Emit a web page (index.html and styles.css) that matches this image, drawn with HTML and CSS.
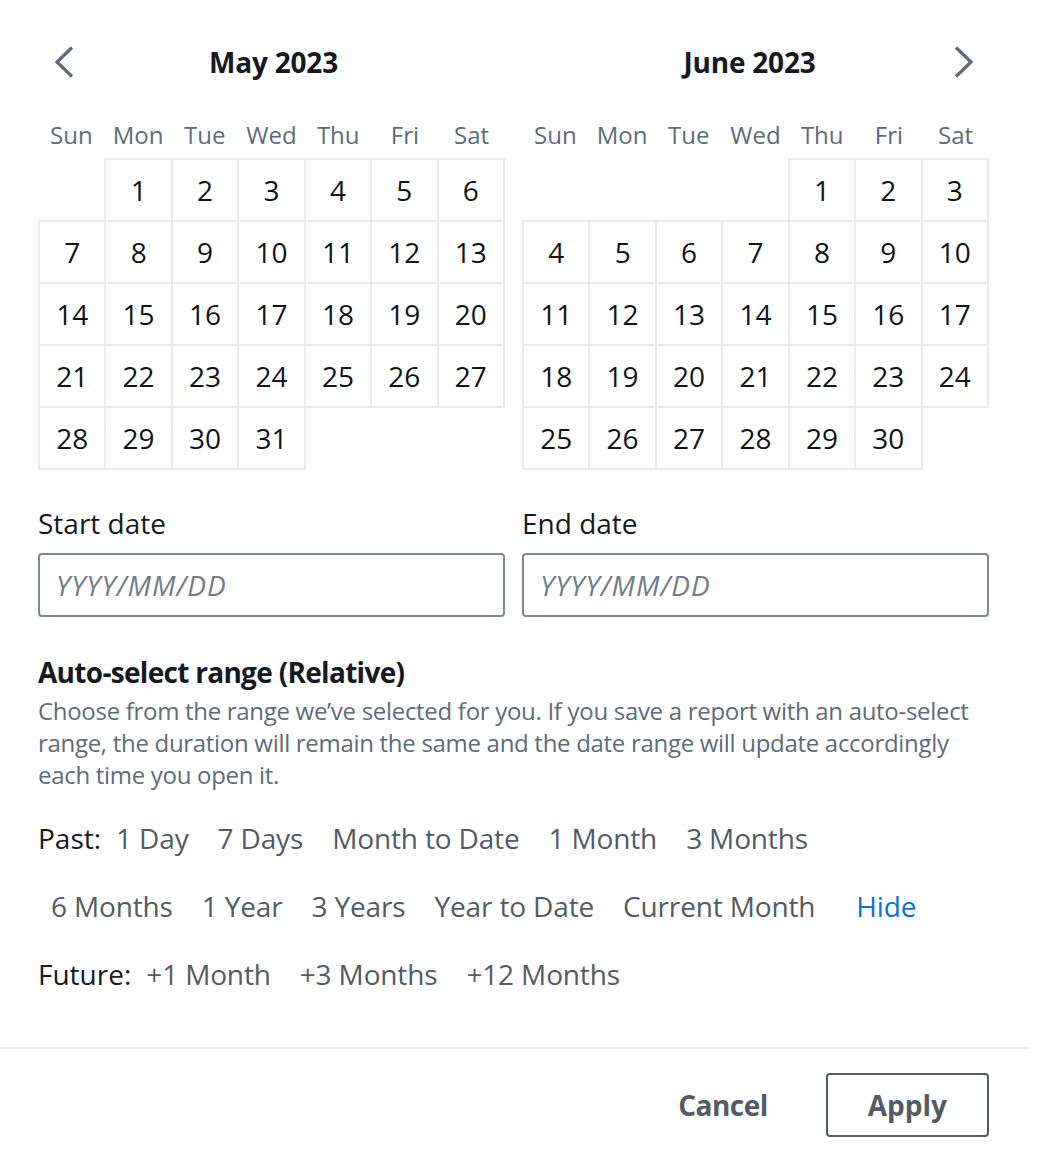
FILE: index.html
```html
<!DOCTYPE html>
<html lang="en">
<head>
<meta charset="utf-8">
<title>Date range picker</title>
<link rel="stylesheet" href="styles.css">
</head>
<body>
<div class="panel">
  <div class="content">
    <div class="months">
      <section class="month">
        <div class="month-head">
          <button class="nav nav-prev" aria-label="Previous month">
            <svg width="20" height="32" viewBox="0 0 20 32"><polyline points="18,1.5 3,16 18,30.5" fill="none" stroke="currentColor" stroke-width="3.2"/></svg>
          </button>
          <h2 class="month-title month-title-left">May 2023</h2>
        </div>
        <div class="weekdays"><span>Sun</span><span>Mon</span><span>Tue</span><span>Wed</span><span>Thu</span><span>Fri</span><span>Sat</span></div>
        <table class="grid">
          <tr><td class="empty"></td><td>1</td><td>2</td><td>3</td><td>4</td><td>5</td><td>6</td></tr>
          <tr><td>7</td><td>8</td><td>9</td><td>10</td><td>11</td><td>12</td><td>13</td></tr>
          <tr><td>14</td><td>15</td><td>16</td><td>17</td><td>18</td><td>19</td><td>20</td></tr>
          <tr><td>21</td><td>22</td><td>23</td><td>24</td><td>25</td><td>26</td><td>27</td></tr>
          <tr><td>28</td><td>29</td><td>30</td><td>31</td><td class="empty"></td><td class="empty"></td><td class="empty"></td></tr>
        </table>
      </section>
      <section class="month">
        <div class="month-head">
          <h2 class="month-title month-title-right">June 2023</h2>
          <button class="nav nav-next" aria-label="Next month">
            <svg width="20" height="32" viewBox="0 0 20 32"><polyline points="2,1.5 17,16 2,30.5" fill="none" stroke="currentColor" stroke-width="3.2"/></svg>
          </button>
        </div>
        <div class="weekdays"><span>Sun</span><span>Mon</span><span>Tue</span><span>Wed</span><span>Thu</span><span>Fri</span><span>Sat</span></div>
        <table class="grid">
          <tr><td class="empty"></td><td class="empty"></td><td class="empty"></td><td class="empty"></td><td>1</td><td>2</td><td>3</td></tr>
          <tr><td>4</td><td>5</td><td>6</td><td>7</td><td>8</td><td>9</td><td>10</td></tr>
          <tr><td>11</td><td>12</td><td>13</td><td>14</td><td>15</td><td>16</td><td>17</td></tr>
          <tr><td>18</td><td>19</td><td>20</td><td>21</td><td>22</td><td>23</td><td>24</td></tr>
          <tr><td>25</td><td>26</td><td>27</td><td>28</td><td>29</td><td>30</td><td class="empty"></td></tr>
        </table>
      </section>
    </div>

    <div class="dates">
      <label class="field">
        <span class="field-label">Start date</span>
        <input class="field-input" type="text" placeholder="YYYY/MM/DD">
      </label>
      <label class="field">
        <span class="field-label">End date</span>
        <input class="field-input" type="text" placeholder="YYYY/MM/DD">
      </label>
    </div>

    <h3 class="auto-title">Auto-select range (Relative)</h3>
    <p class="auto-desc">Choose from the range we’ve selected for you. If you save a report with an auto-select range, the duration will remain the same and the date range will update accordingly each time you open it.</p>

    <div class="opt-row opt-row-first">
      <span class="opt-label">Past:</span>
      <button class="opt">1 Day</button>
      <button class="opt">7 Days</button>
      <button class="opt">Month to Date</button>
      <button class="opt">1 Month</button>
      <button class="opt">3 Months</button>
    </div>
    <div class="opt-row">
      <button class="opt">6 Months</button>
      <button class="opt">1 Year</button>
      <button class="opt">3 Years</button>
      <button class="opt">Year to Date</button>
      <button class="opt">Current Month</button>
      <button class="opt opt-link">Hide</button>
    </div>
    <div class="opt-row">
      <span class="opt-label">Future:</span>
      <button class="opt">+1 Month</button>
      <button class="opt">+3 Months</button>
      <button class="opt">+12 Months</button>
    </div>
  </div>

  <div class="footer">
    <button class="btn btn-link">Cancel</button>
    <button class="btn btn-normal">Apply</button>
  </div>
</div>
</body>
</html>
```

FILE: styles.css
```css
body {
  margin: 0;
  background: #ffffff;
  font-family: "Open Sans", "Noto Sans", sans-serif;
  color: #16191f;
}

.panel {
  width: 1030px;
}

.content {
  padding: 42px 41px 0 38px;
}

.months {
  display: flex;
  gap: 17px;
}

.month {
  width: 467px;
}

.month-head {
  display: grid;
  grid-template-columns: 1fr auto 1fr;
  align-items: center;
  height: 40px;
}

.nav {
  background: none;
  border: 0;
  padding: 0;
  width: 20px;
  height: 32px;
  display: flex;
  color: #5f6b7a;
  cursor: pointer;
}

.nav-prev {
  grid-column: 1;
  justify-self: start;
  margin-left: 16px;
}

.nav-next {
  grid-column: 3;
  justify-self: end;
  margin-right: 15px;
}

.month-title {
  grid-column: 2;
  grid-row: 1;
  margin: 0;
  font-size: 28px;
  line-height: 40px;
  font-weight: 700;
  letter-spacing: -0.2px;
}

.month-title-left {
  padding-left: 4px;
}

.month-title-right {
  padding-right: 12px;
}

.weekdays {
  display: grid;
  grid-template-columns: repeat(7, 1fr);
  margin: 33px 0 3px;
  height: 40px;
  line-height: 40px;
  font-size: 24px;
  color: #5f6b7a;
  text-align: center;
}

.grid {
  width: 467px;
  border-collapse: collapse;
  table-layout: fixed;
}

.grid td {
  height: 60px;
  padding: 0;
  text-align: center;
  font-size: 28px;
  color: #0f141a;
  border: 2px solid #e9ebed;
}

.grid td.empty {
  border: none;
}

.dates {
  display: flex;
  gap: 17px;
  margin-top: 33px;
}

.field {
  width: 467px;
  display: flex;
  flex-direction: column;
  gap: 10px;
}

.field-label {
  font-size: 28px;
  line-height: 40px;
}

.field-input {
  height: 64px;
  box-sizing: border-box;
  border: 2px solid #7d8998;
  border-radius: 4px;
  padding: 0 16px;
  font-family: inherit;
  font-size: 28px;
  font-style: italic;
  letter-spacing: 1px;
  color: #16191f;
  outline: none;
}

.field-input::placeholder {
  color: #747c87;
  font-style: italic;
}

.auto-title {
  margin: 35px 0 0;
  font-size: 28px;
  line-height: 40px;
  font-weight: 700;
  letter-spacing: -0.7px;
}

.auto-desc {
  margin: 3px 0 0;
  font-size: 24px;
  line-height: 32px;
  letter-spacing: -0.3px;
  color: #5f6b7a;
}

.opt-row {
  display: flex;
  align-items: center;
  height: 68px;
}

.opt-row-first {
  margin-top: 13px;
}

.opt-label {
  font-size: 28px;
  line-height: 40px;
  margin-right: 2px;
}

.opt {
  font-family: inherit;
  font-size: 28px;
  line-height: 40px;
  letter-spacing: -0.15px;
  color: #545b64;
  background: none;
  border: 0;
  padding: 14px 13px;
  margin-right: 3px;
  cursor: pointer;
}

.opt-link {
  color: #0972d3;
  margin-left: 12px;
}

.footer {
  margin-top: 39px;
  border-top: 2px solid #e9ebed;
  padding: 24px 41px 0 0;
  display: flex;
  justify-content: flex-end;
  gap: 16px;
}

.btn {
  font-family: inherit;
  font-size: 28px;
  line-height: 40px;
  font-weight: 700;
  padding: 10px 40px;
  border: 2px solid transparent;
  border-radius: 4px;
  color: #545b64;
  background: #ffffff;
  cursor: pointer;
}

.btn-link {
  letter-spacing: -0.5px;
}

.btn-normal {
  border-color: #545b64;
}
```
